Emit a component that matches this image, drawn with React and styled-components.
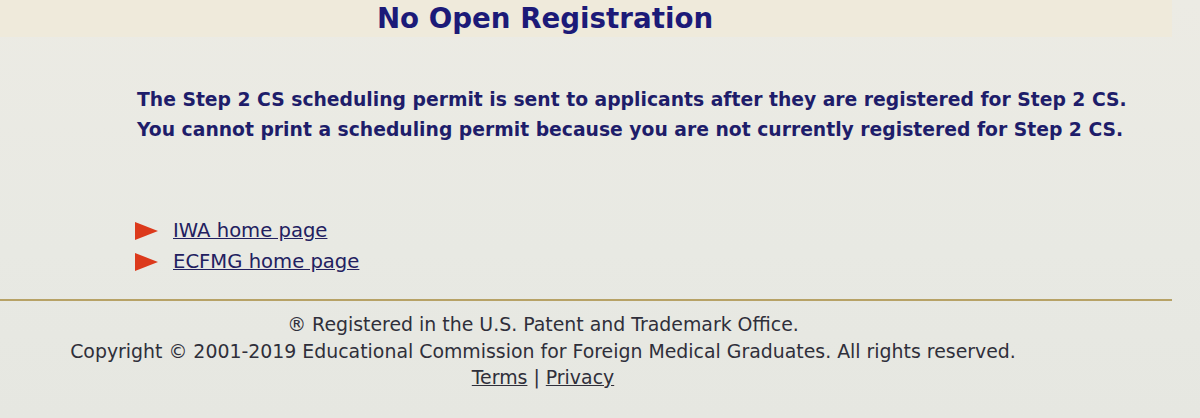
import styled, { createGlobalStyle } from 'styled-components';

const GlobalStyle = createGlobalStyle`
  body {
    margin: 0;
    background: #e9e9e2;
    font-family: "DejaVu Sans", Verdana, sans-serif;
  }
`

const Page = styled.div`
  width: 1200px;
  height: 418px;
  overflow: hidden;
  background: linear-gradient(180deg, #ecebe4 0%, #e8e9e3 60%, #e6e7e1 100%);
`

const TitleBar = styled.div`
  width: 1172px;
  height: 37px;
  padding-right: 82px;
  box-sizing: border-box;
  background: #efeadb;
  text-align: center;
`

const Title = styled.h1`
  margin: 0;
  font-size: 27.7px;
  line-height: 37px;
  font-weight: bold;
  color: #1c1a78;
`

const Message = styled.p`
  margin: 0;
  padding: 48px 0 0 137px;
  font-size: 18.75px;
  line-height: 30px;
  font-weight: bold;
  color: #1e1d6a;
`

const LinkList = styled.ul`
  list-style: none;
  margin: 0;
  padding: 70px 0 0 135px;
`

const LinkItem = styled.li`
  display: flex;
  align-items: center;
  gap: 15px;
  height: 31px;
`

const Arrow = styled.span`
  width: 0;
  height: 0;
  border-top: 9px solid transparent;
  border-bottom: 9px solid transparent;
  border-left: 23px solid #dc3a1c;
`

const Link = styled.a`
  font-size: 19.6px;
  color: #222060;
  text-decoration: underline;
`

const Rule = styled.hr`
  width: 1172px;
  margin: 22px 0 0;
  border: 0;
  border-top: 2px solid #b7a266;
`

const Footer = styled.footer`
  width: 1086px;
  padding-top: 10px;
  text-align: center;
  font-size: 18.9px;
  line-height: 26.5px;
  color: #2f2f3a;
`

const FooterLink = styled.a`
  color: #2f2f3a;
  text-decoration: underline;
`

function App() {
  return (
    <>
      <GlobalStyle />
      <Page>
        <TitleBar>
          <Title>No Open Registration</Title>
        </TitleBar>
        <Message>
          The Step 2 CS scheduling permit is sent to applicants after they are registered for Step 2 CS.<br />
          You cannot print a scheduling permit because you are not currently registered for Step 2 CS.
        </Message>
        <LinkList>
          <LinkItem>
            <Arrow />
            <Link href="#">IWA home page</Link>
          </LinkItem>
          <LinkItem>
            <Arrow />
            <Link href="#">ECFMG home page</Link>
          </LinkItem>
        </LinkList>
        <Rule />
        <Footer>
          <div>® Registered in the U.S. Patent and Trademark Office.</div>
          <div>Copyright © 2001-2019 Educational Commission for Foreign Medical Graduates. All rights reserved.</div>
          <div>
            <FooterLink href="#">Terms</FooterLink> | <FooterLink href="#">Privacy</FooterLink>
          </div>
        </Footer>
      </Page>
    </>
  );
}

export default App;
